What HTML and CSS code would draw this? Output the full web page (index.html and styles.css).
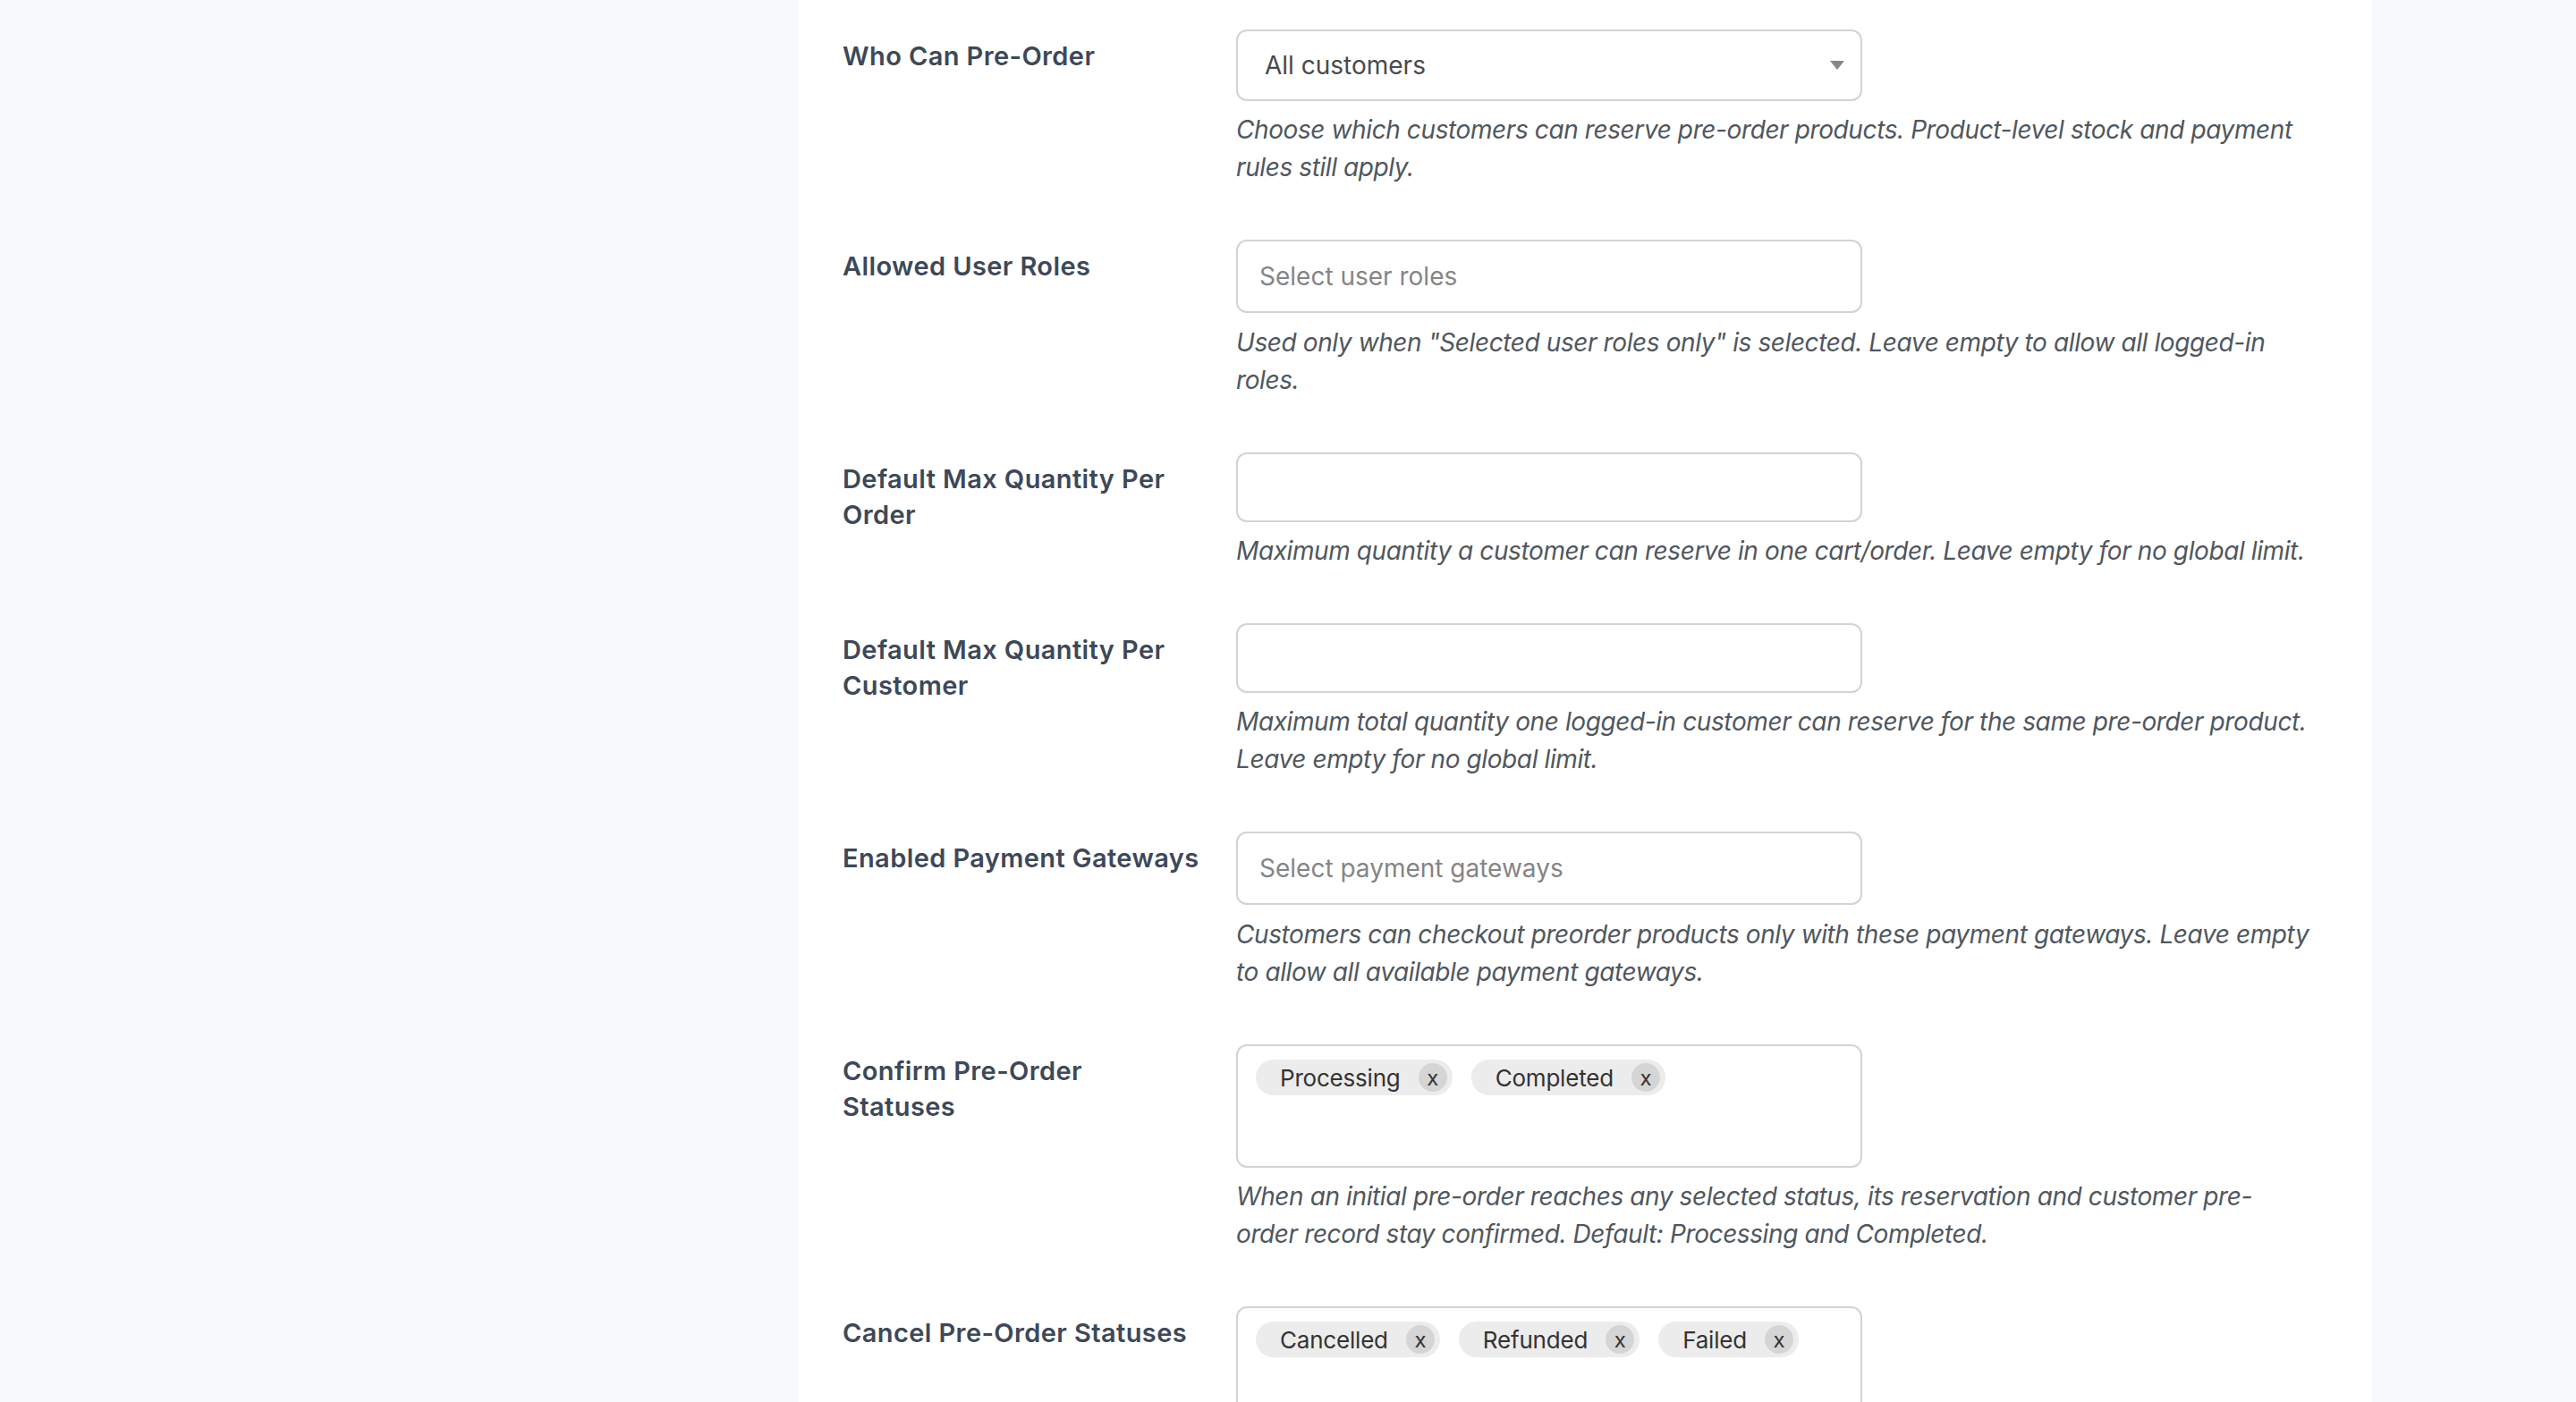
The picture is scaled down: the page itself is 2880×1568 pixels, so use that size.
FILE: index.html
```html
<!DOCTYPE html>
<html lang="en">

<head>
    <meta charset="UTF-8">
    <meta name="viewport" content="width=device-width, initial-scale=1.0">
    <title>Pre-Order Settings</title>
    <link rel="stylesheet" href="styles.css">
</head>

<body>
    <main class="page">
        <div class="card">
            <div class="row">
                <div class="label">Who Can Pre-Order</div>
                <div class="field">
                    <div class="select single">
                        <span class="value">All customers</span>
                        <span class="arrow"></span>
                    </div>
                    <p class="desc">Choose which customers can reserve pre-order products. Product-level stock and payment rules still apply.</p>
                </div>
            </div>

            <div class="row">
                <div class="label">Allowed User Roles</div>
                <div class="field">
                    <div class="select multi">
                        <span class="placeholder">Select user roles</span>
                    </div>
                    <p class="desc">Used only when "Selected user roles only" is selected. Leave empty to allow all logged-in roles.</p>
                </div>
            </div>

            <div class="row">
                <div class="label">Default Max Quantity Per<br>Order</div>
                <div class="field">
                    <input class="input" type="number">
                    <p class="desc">Maximum quantity a customer can reserve in one cart/order. Leave empty for no global limit.</p>
                </div>
            </div>

            <div class="row">
                <div class="label">Default Max Quantity Per<br>Customer</div>
                <div class="field">
                    <input class="input" type="number">
                    <p class="desc">Maximum total quantity one logged-in customer can reserve for the same pre-order product. Leave empty for no global limit.</p>
                </div>
            </div>

            <div class="row">
                <div class="label">Enabled Payment Gateways</div>
                <div class="field">
                    <div class="select multi">
                        <span class="placeholder">Select payment gateways</span>
                    </div>
                    <p class="desc">Customers can checkout preorder products only with these payment gateways. Leave empty to allow all available payment gateways.</p>
                </div>
            </div>

            <div class="row">
                <div class="label">Confirm Pre-Order<br>Statuses</div>
                <div class="field">
                    <div class="tags">
                        <span class="tag">Processing <span class="remove">x</span></span>
                        <span class="tag">Completed <span class="remove">x</span></span>
                    </div>
                    <p class="desc">When an initial pre-order reaches any selected status, its reservation and customer pre-<br>order record stay confirmed. Default: Processing and Completed.</p>
                </div>
            </div>

            <div class="row">
                <div class="label">Cancel Pre-Order Statuses</div>
                <div class="field">
                    <div class="tags">
                        <span class="tag">Cancelled <span class="remove">x</span></span>
                        <span class="tag">Refunded <span class="remove">x</span></span>
                        <span class="tag">Failed <span class="remove">x</span></span>
                    </div>
                </div>
            </div>
        </div>
    </main>
</body>

</html>
```

FILE: styles.css
```css
* {
    box-sizing: border-box;
}

html {
    /* screenshot is 2x */
    zoom: 2;
}

body {
    margin: 0;
    background-color: #f8f9fb;
    font-family: Inter, "Noto Sans", sans-serif;
    font-size: 14px;
    color: #3c434a;
    overflow: hidden;
}

.page {
    height: 784px;
}

.card {
    width: 880px;
    min-height: 100%;
    margin-left: 446px;
    padding: 1.5px 25px 0 25px;
    background-color: #fff;
}

.row {
    display: flex;
}

.label {
    width: 200px;
    flex-shrink: 0;
    padding: 20px 10px 20px 0;
    box-sizing: content-box;
    font-size: 14.5px;
    font-weight: 600;
    line-height: 20px;
    color: #3d4858;
    white-space: nowrap;
    letter-spacing: 0.2px;
}

.field {
    flex: 1;
    padding: 15px 10px;
}

/* select2 look-alike boxes */
.select {
    display: flex;
    align-items: center;
    width: 350px;
    height: 41px;
    border: 1px solid #d3d3d6;
    border-radius: 6px;
    background: #fff;
}

.single {
    height: 40px;
    padding: 0 9px 0 15px;
    justify-content: space-between;
    color: #4a4a4a;
}

.multi {
    padding-left: 12px;
}

.placeholder {
    color: #858585;
}

.arrow {
    width: 0;
    height: 0;
    border-style: solid;
    border-width: 5px 4px 0 4px;
    border-color: #888 transparent transparent transparent;
}

.input {
    display: block;
    width: 350px;
    height: 39px;
    margin: 0;
    border: 1px solid #d3d3d6;
    border-radius: 6px;
    background: #fff;
}

.tags {
    display: flex;
    align-items: flex-start;
    gap: 10.5px;
    width: 350px;
    height: 69px;
    padding: 7.5px 10px;
    border: 1px solid #d3d3d6;
    border-radius: 6px;
}

.tag {
    display: inline-flex;
    align-items: center;
    height: 20px;
    padding: 0 3px 0 13.5px;
    border-radius: 10px;
    background-color: #ececec;
    color: #333;
    font-size: 13px;
    letter-spacing: -0.1px;
}

.remove {
    display: inline-flex;
    align-items: center;
    justify-content: center;
    width: 16px;
    height: 16px;
    margin-left: 10px;
    border-radius: 50%;
    background-color: #d5d5d5;
    font-size: 12px;
    color: #333;
}

.desc {
    max-width: 602px;
    margin: 5.5px 0 0;
    font-style: italic;
    line-height: 21px;
    color: #50575e;
    letter-spacing: -0.2px;
}

.multi + .desc {
    margin-top: 6px;
}
```
